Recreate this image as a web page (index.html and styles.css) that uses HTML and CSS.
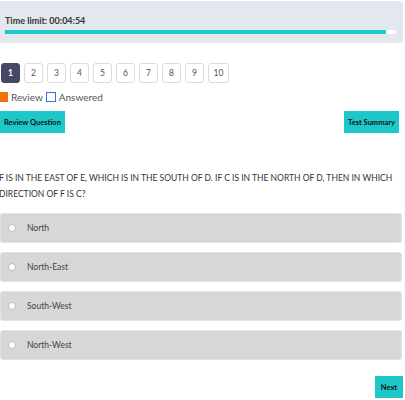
FILE: index.html
```html
<!DOCTYPE html>
<html>
<head>
<meta charset="utf-8">
<link rel="stylesheet" href="styles.css">
</head>
<body>
<div class="timer">
  <div class="timer-label">Time limit: 00:04:54</div>
  <div class="bar"><div class="bar-fill" style="width:97.5%"></div></div>
</div>
<div class="pages">
  <span class="page active">1</span>
  <span class="page">2</span>
  <span class="page">3</span>
  <span class="page">4</span>
  <span class="page">5</span>
  <span class="page">6</span>
  <span class="page">7</span>
  <span class="page">8</span>
  <span class="page">9</span>
  <span class="page wide">10</span>
</div>
<div class="legend">
  <span class="sq review"></span><span class="lg-text">Review</span>
  <span class="sq answered"></span><span class="lg-text">Answered</span>
</div>
<div class="actions">
  <button class="btn">Review Question</button>
  <button class="btn">Test Summary</button>
</div>
<p class="question">F IS IN THE EAST OF E, WHICH IS IN THE SOUTH OF D. IF C IS IN THE NORTH OF D, THEN IN WHICH DIRECTION OF F IS C?</p>
<div class="options">
  <label class="option"><span class="radio"></span><span>North</span></label>
  <label class="option"><span class="radio"></span><span>North-East</span></label>
  <label class="option"><span class="radio"></span><span>South-West</span></label>
  <label class="option"><span class="radio"></span><span>North-West</span></label>
</div>
<div class="footer">
  <button class="btn next">Next</button>
</div>
</body>
</html>
```
FILE: styles.css
```css
html, body {
  margin: 0;
  padding: 0;
  background: #fff;
  font-family: Lato, "Open Sans", sans-serif;
  width: 405px;
  overflow: hidden;
}
.timer {
  box-sizing: border-box;
  height: 42px;
  margin: 1px 2px 0 0;
  padding: 14px 7px 0 5px;
  background: #e3e7ee;
  border-radius: 0 4px 4px 0;
}
.timer-label {
  font-size: 9px;
  font-weight: 700;
  line-height: 12px;
  color: #333;
}
.bar {
  margin-top: 3px;
  height: 4px;
  background: #fff;
}
.bar-fill {
  height: 100%;
  background: #1cc8c8;
}
.pages {
  display: flex;
  gap: 4px;
  margin-top: 20px;
  padding-left: 1px;
}
.page {
  box-sizing: border-box;
  width: 19px;
  height: 20px;
  border: 1px solid #dcdcdc;
  border-radius: 3px;
  display: flex;
  align-items: center;
  justify-content: center;
  font-size: 8.5px;
  color: #555;
}
.page.wide { width: 21px; }
.page.active {
  background: #47476a;
  border-color: #47476a;
  color: #fff;
  font-weight: 700;
}
.legend {
  display: flex;
  align-items: center;
  margin-top: 8px;
  margin-left: -2px;
  height: 11px;
  font-size: 10px;
  color: #555;
}
.sq {
  box-sizing: border-box;
  width: 10px;
  height: 10px;
  margin-right: 3px;
}
.sq.review { background: #ee7205; }
.sq.answered { border: 1px solid #3e6fd6; background: #fff; margin-left: 3px; }
.actions {
  display: flex;
  justify-content: space-between;
  margin-top: 9px;
  padding-right: 6px;
}
.btn {
  border: none;
  border-radius: 0;
  background: #1fc8c8;
  height: 22px;
  padding: 0 4px;
  font-family: Lato, "Open Sans", sans-serif;
  font-size: 7.5px;
  font-weight: 700;
  color: #111;
}
.question {
  margin: 37px 0 0 -1px;
  font-size: 8.5px;
  line-height: 16px;
  color: #333;
}
.options {
  display: flex;
  flex-direction: column;
  gap: 9px;
  margin-top: 11px;
  margin-right: 3px;
}
.option {
  box-sizing: border-box;
  height: 30px;
  display: flex;
  align-items: center;
  background: #d7d7d7;
  border: 1px solid #e2e2e2;
  border-radius: 3px;
  font-size: 8.5px;
  color: #444;
  padding-left: 7px;
}
.radio {
  box-sizing: border-box;
  width: 8px;
  height: 8px;
  border-radius: 50%;
  background: #fff;
  border: 1px solid #bdbdbd;
  margin-right: 11px;
}
.footer {
  display: flex;
  justify-content: flex-end;
  margin-top: 16px;
  padding-right: 2px;
}
.btn.next { width: 28px; padding: 0; }
```
